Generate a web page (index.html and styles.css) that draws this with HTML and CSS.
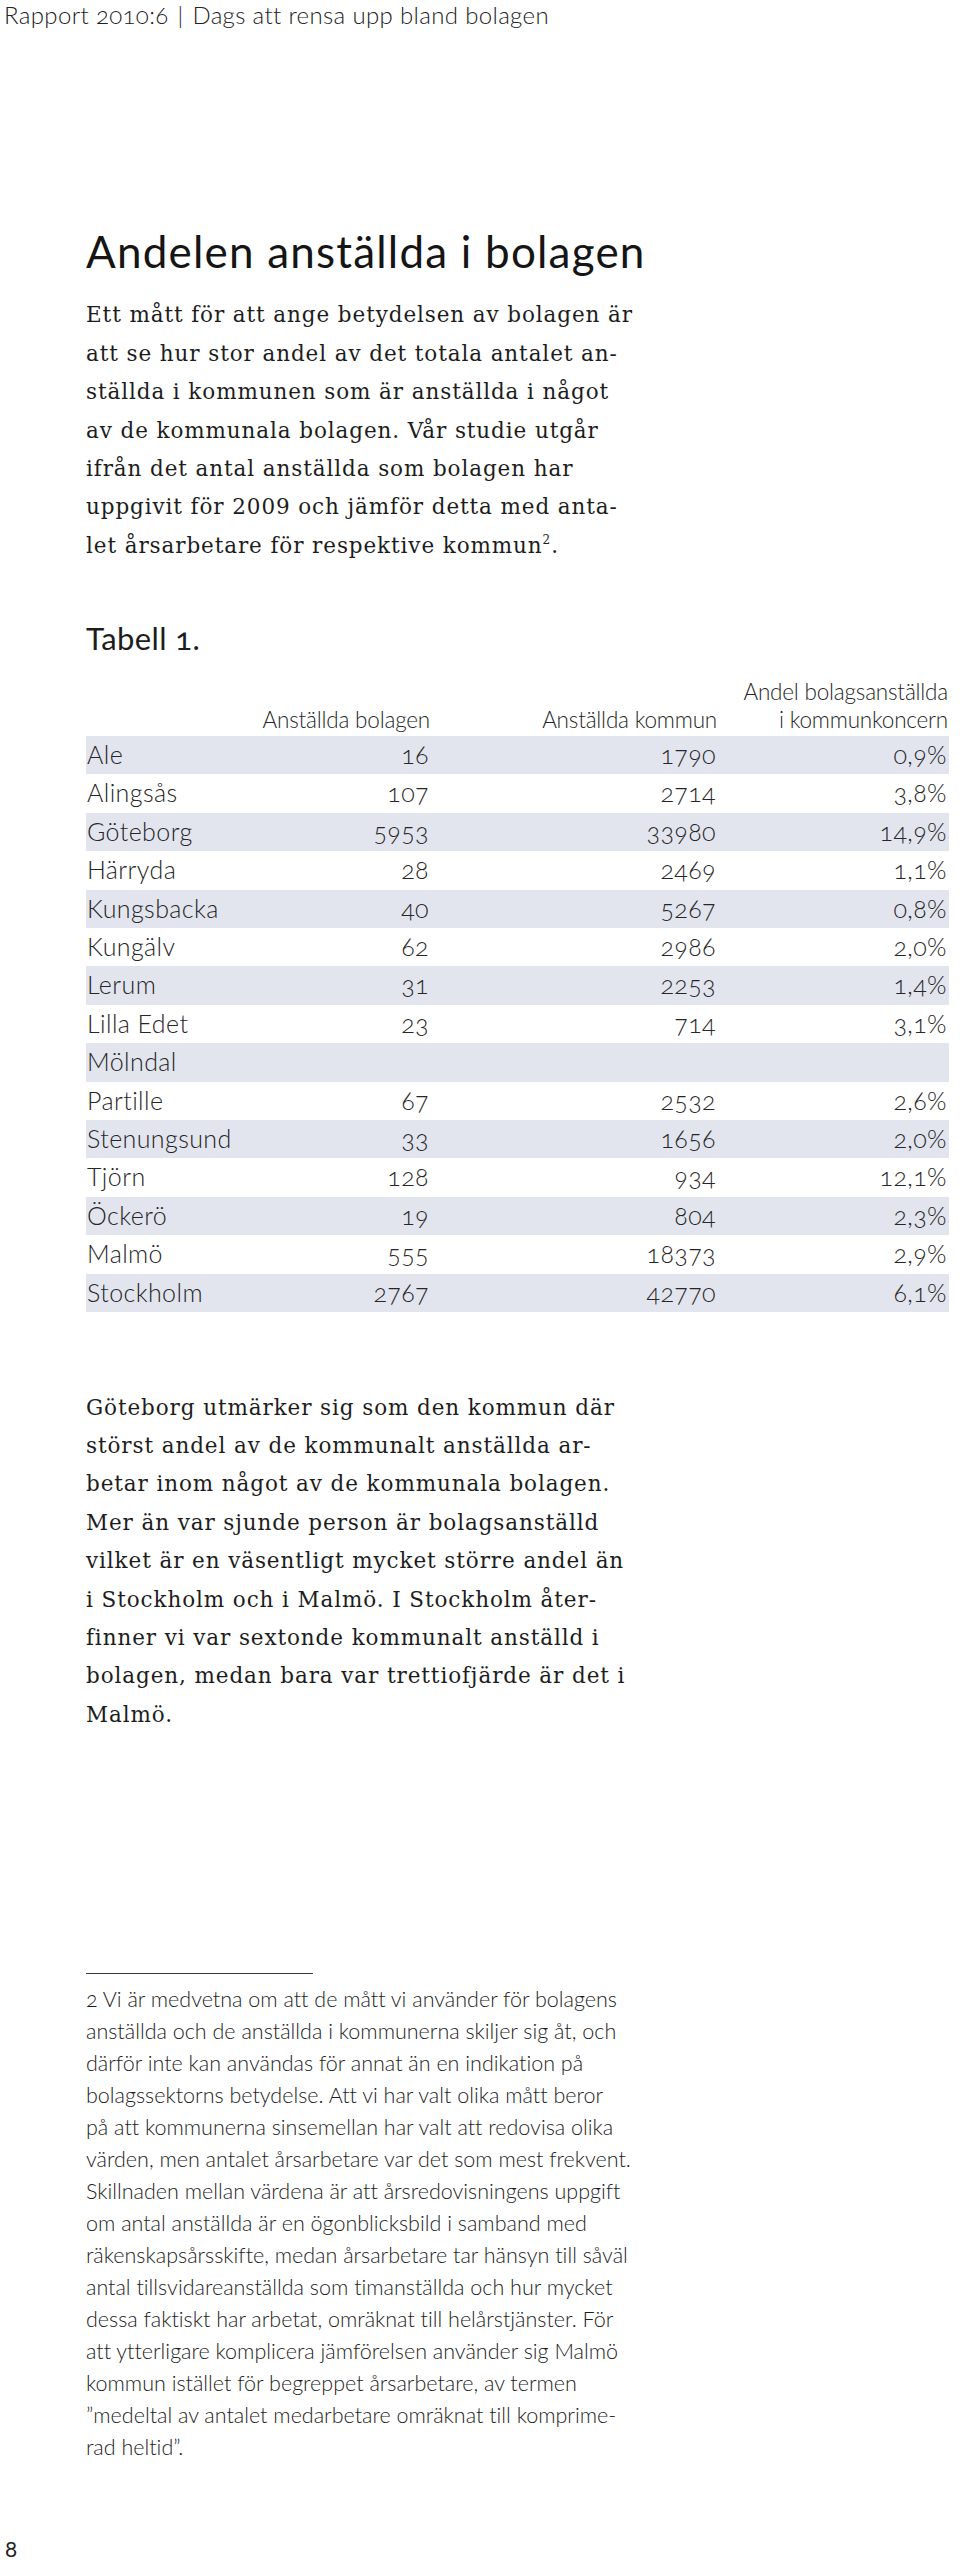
FILE: index.html
```html
<!DOCTYPE html>
<html lang="sv">
<head>
<meta charset="utf-8">
<title>Rapport 2010:6 | Dags att rensa upp bland bolagen</title>
<link rel="stylesheet" href="styles.css">
</head>
<body>
<header class="running-head">Rapport 2010:6 <span class="sep">|</span> Dags att rensa upp bland bolagen</header>
<main class="content">
  <h1 class="title">Andelen anställda i bolagen</h1>
  <p class="body-text">Ett mått för att ange betydelsen av bolagen är<br>att se hur stor andel av det totala antalet an-<br>ställda i kommunen som är anställda i något<br>av de kommunala bolagen. Vår studie utgår<br>ifrån det antal anställda som bolagen har<br>uppgivit för 2009 och jämför detta med anta-<br>let årsarbetare för respektive kommun<sup class="fn-ref">2</sup>.</p>

  <h2 class="table-title">Tabell 1.</h2>
  <table class="data-table">
    <colgroup>
      <col class="col-name">
      <col class="col-a">
      <col class="col-b">
      <col class="col-c">
    </colgroup>
    <thead>
      <tr><th></th><th>Anställda bolagen</th><th>Anställda kommun</th><th>Andel bolagsanställda<br>i kommunkoncern</th></tr>
    </thead>
    <tbody>
      <tr><td>Ale</td><td>16</td><td>1790</td><td>0,9%</td></tr>
      <tr><td>Alingsås</td><td>107</td><td>2714</td><td>3,8%</td></tr>
      <tr><td>Göteborg</td><td>5953</td><td>33980</td><td>14,9%</td></tr>
      <tr><td>Härryda</td><td>28</td><td>2469</td><td>1,1%</td></tr>
      <tr><td>Kungsbacka</td><td>40</td><td>5267</td><td>0,8%</td></tr>
      <tr><td>Kungälv</td><td>62</td><td>2986</td><td>2,0%</td></tr>
      <tr><td>Lerum</td><td>31</td><td>2253</td><td>1,4%</td></tr>
      <tr><td>Lilla Edet</td><td>23</td><td>714</td><td>3,1%</td></tr>
      <tr><td>Mölndal</td><td></td><td></td><td></td></tr>
      <tr><td>Partille</td><td>67</td><td>2532</td><td>2,6%</td></tr>
      <tr><td>Stenungsund</td><td>33</td><td>1656</td><td>2,0%</td></tr>
      <tr><td>Tjörn</td><td>128</td><td>934</td><td>12,1%</td></tr>
      <tr><td>Öckerö</td><td>19</td><td>804</td><td>2,3%</td></tr>
      <tr><td>Malmö</td><td>555</td><td>18373</td><td>2,9%</td></tr>
      <tr><td>Stockholm</td><td>2767</td><td>42770</td><td>6,1%</td></tr>
    </tbody>
  </table>

  <p class="body-text after-table">Göteborg utmärker sig som den kommun där<br>störst andel av de kommunalt anställda ar-<br>betar inom något av de kommunala bolagen.<br>Mer än var sjunde person är bolagsanställd<br>vilket är en väsentligt mycket större andel än<br>i Stockholm och i Malmö. I Stockholm åter-<br>finner vi var sextonde kommunalt anställd i<br>bolagen, medan bara var trettiofjärde är det i<br>Malmö.</p>

  <aside class="footnotes">
    <div class="footnote-rule"></div>
    <p class="footnote">2 Vi är medvetna om att de mått vi använder för bolagens<br>anställda och de anställda i kommunerna skiljer sig åt, och<br>därför inte kan användas för annat än en indikation på<br>bolagssektorns betydelse. Att vi har valt olika mått beror<br>på att kommunerna sinsemellan har valt att redovisa olika<br>värden, men antalet årsarbetare var det som mest frekvent.<br>Skillnaden mellan värdena är att årsredovisningens uppgift<br>om antal anställda är en ögonblicksbild i samband med<br>räkenskapsårsskifte, medan årsarbetare tar hänsyn till såväl<br>antal tillsvidareanställda som timanställda och hur mycket<br>dessa faktiskt har arbetat, omräknat till helårstjänster. För<br>att ytterligare komplicera jämförelsen använder sig Malmö<br>kommun istället för begreppet årsarbetare, av termen<br>”medeltal av antalet medarbetare omräknat till komprime-<br>rad heltid”.</p>
  </aside>
</main>
<footer class="page-number">8</footer>
</body>
</html>
```

FILE: styles.css
```css
* {
  box-sizing: border-box;
}

html,
body {
  margin: 0;
  padding: 0;
}

body {
  height: 2560px;
  overflow: hidden;
  display: flex;
  flex-direction: column;
  background: #ffffff;
  color: #1d1d1d;
  font-family: "Lato", "Liberation Sans", sans-serif;
  font-variant-numeric: oldstyle-nums;
  font-variant-ligatures: no-common-ligatures;
}

.running-head {
  font-weight: 300;
  font-size: 24px;
  line-height: 30px;
  letter-spacing: 0.35px;
  padding-left: 4px;
  color: #222222;
  white-space: nowrap;
}

.running-head .sep {
  margin: 0 2px;
}

.content {
  padding-left: 86px;
}

.title {
  margin: 196px 0 0;
  font-weight: 400;
  font-size: 44px;
  line-height: 50px;
  letter-spacing: 1.2px;
  color: #151515;
  white-space: nowrap;
}

.body-text {
  margin: 20.4px 0 0;
  font-family: "DejaVu Serif", "Liberation Serif", serif;
  font-variant-numeric: lining-nums;
  font-size: 21.5px;
  line-height: 38.4px;
  letter-spacing: 0.9px;
  color: #1d1d1d;
  white-space: nowrap;
}

.fn-ref {
  font-size: 12px;
  line-height: 0;
  vertical-align: 9px;
}

.table-title {
  margin: 55.2px 0 0;
  font-weight: 400;
  font-size: 31px;
  line-height: 36px;
  letter-spacing: 0.4px;
  color: #1d1d1d;
}

.data-table {
  margin-top: 21.1px;
  width: 863px;
  table-layout: fixed;
  border-collapse: collapse;
  border-spacing: 0;
  color: #262626;
}

.col-name { width: 170px; }
.col-a { width: 175px; }
.col-b { width: 287px; }
.col-c { width: 231px; }

.data-table th {
  padding: 0 1px 2.5px 0;
  font-weight: 300;
  font-size: 22.5px;
  line-height: 28px;
  text-align: right;
  vertical-align: bottom;
  white-space: nowrap;
  letter-spacing: -0.2px;
}

.data-table td {
  padding: 0 2px 2px 0;
  height: 38.4px;
  font-weight: 300;
  font-size: 25px;
  line-height: 36.4px;
  letter-spacing: 0.4px;
  text-align: right;
  white-space: nowrap;
}

.data-table td:first-child {
  text-align: left;
  padding-left: 1px;
}

.data-table tbody tr:nth-child(odd) {
  background: #e2e5ee;
}

.after-table {
  margin-top: 76.4px;
}

.footnotes {
  margin-top: 239px;
}

.footnote-rule {
  width: 227px;
  border-top: 1px solid #3a3a3a;
}

.footnote {
  margin: 8.7px 0 0;
  font-weight: 300;
  font-size: 21.5px;
  line-height: 32px;
  letter-spacing: 0;
  color: #1d1d1d;
  white-space: nowrap;
}

.page-number {
  margin-top: auto;
  padding-left: 5px;
  font-size: 21px;
  line-height: 22px;
  font-variant-numeric: lining-nums;
  color: #222222;
}
```
